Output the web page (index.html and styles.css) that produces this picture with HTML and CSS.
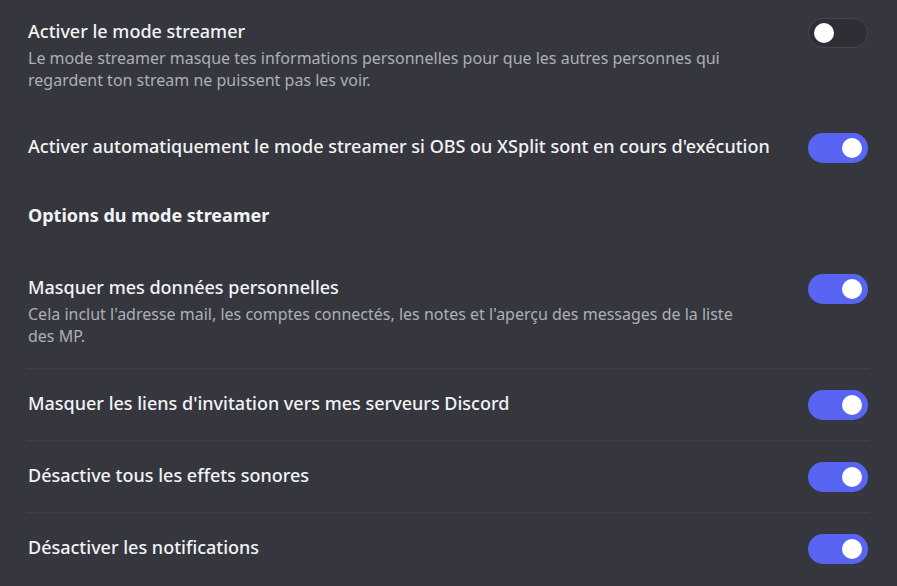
FILE: index.html
```html
<!DOCTYPE html>
<html lang="fr">
<head>
<meta charset="utf-8">
<link rel="stylesheet" href="styles.css">
</head>
<body>
<div class="page">
  <div class="row first">
    <div class="text">
      <div class="title">Activer le mode streamer</div>
      <div class="desc">Le mode streamer masque tes informations personnelles pour que les autres personnes qui regardent ton stream ne puissent pas les voir.</div>
    </div>
    <div class="toggle off"><span class="knob"></span></div>
  </div>
  <div class="row second">
    <div class="text">
      <div class="title">Activer automatiquement le mode streamer si OBS ou XSplit sont en cours d'exécution</div>
    </div>
    <div class="toggle on"><span class="knob"></span></div>
  </div>
  <h2 class="heading">Options du mode streamer</h2>
  <div class="row opt lead">
    <div class="text">
      <div class="title">Masquer mes données personnelles</div>
      <div class="desc">Cela inclut l'adresse mail, les comptes connectés, les notes et l'aperçu des messages de la liste des MP.</div>
    </div>
    <div class="toggle on"><span class="knob"></span></div>
  </div>
  <div class="row opt">
    <div class="text"><div class="title">Masquer les liens d'invitation vers mes serveurs Discord</div></div>
    <div class="toggle on"><span class="knob"></span></div>
  </div>
  <div class="row opt">
    <div class="text"><div class="title">Désactive tous les effets sonores</div></div>
    <div class="toggle on"><span class="knob"></span></div>
  </div>
  <div class="row opt">
    <div class="text"><div class="title">Désactiver les notifications</div></div>
    <div class="toggle on"><span class="knob"></span></div>
  </div>
</div>
</body>
</html>
```
FILE: styles.css
```css
* { box-sizing: border-box; }
html, body { margin: 0; padding: 0; }
body {
  background: #36373e;
  font-family: "Noto Sans", "Open Sans", sans-serif;
  color: #f2f3f5;
  width: 897px;
  height: 586px;
  overflow: hidden;
}
.page {
  padding: 18px 29px 0 28px;
}
.row {
  display: flex;
  align-items: flex-start;
  justify-content: space-between;
  gap: 20px;
}
.text { flex: 1; }
.title {
  font-size: 18px;
  line-height: 26px;
  font-weight: 500;
}
.desc {
  margin-top: 3px;
  font-size: 16px;
  line-height: 22px;
  color: #abafb6;
  max-width: 730px;
}
.row.second { margin-top: 42px; }
.heading {
  margin: 39px 0 0;
  font-size: 18px;
  line-height: 26px;
  font-weight: 700;
}
.row.opt {
  padding: 21px 0 20px;
  border-bottom: 1px solid #404149;
}
.row.opt:last-child { border-bottom: none; }
.row.opt.lead { margin-top: 46px; padding-top: 0; padding-bottom: 21px; }
.toggle {
  flex: none;
  width: 60px;
  height: 30px;
  border-radius: 15px;
  position: relative;
}
.toggle.on { background: #5865f2; }
.toggle.off {
  background: #2e2f35;
  border: 1px solid #44454c;
}
.knob {
  position: absolute;
  top: 5px;
  width: 20px;
  height: 20px;
  border-radius: 50%;
  background: #fff;
}
.toggle.on .knob { right: 6px; }
.toggle.off .knob { left: 5px; top: 4px; }
```
